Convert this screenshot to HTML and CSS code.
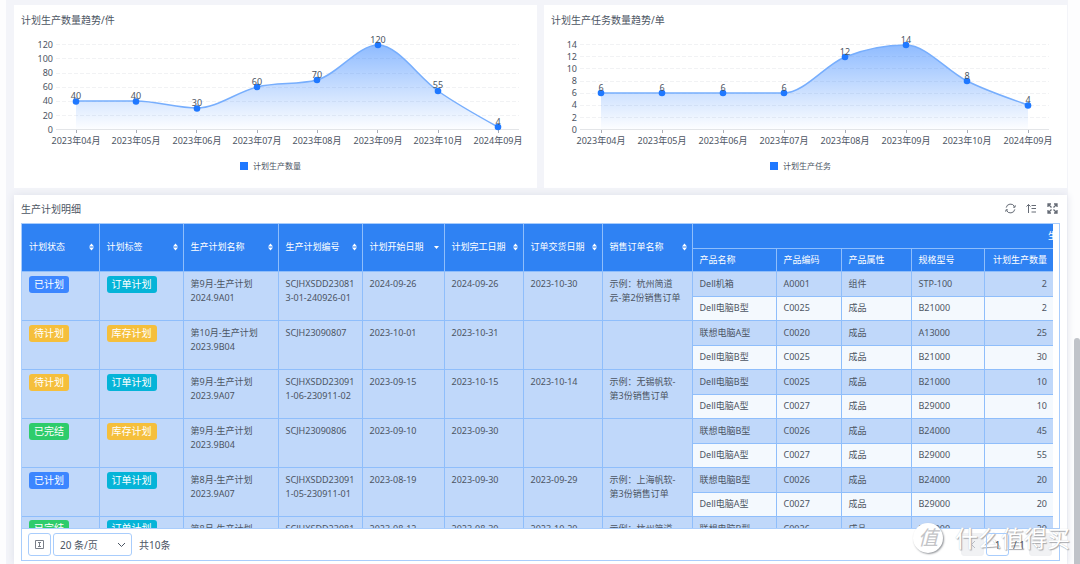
FILE: index.html
```html
<!DOCTYPE html>
<html lang="zh-CN">
<head>
<meta charset="utf-8">
<title>生产计划</title>
<link rel="stylesheet" href="styles.css">
</head>
<body>
<svg class="defs" width="0" height="0" aria-hidden="true">
  <defs>
    <linearGradient id="area" x1="0" y1="15" x2="0" y2="99" gradientUnits="userSpaceOnUse">
      <stop offset="0" stop-color="#1f78ff" stop-opacity=".5"/>
      <stop offset="1" stop-color="#1f78ff" stop-opacity=".01"/>
    </linearGradient>
    <symbol id="sort" viewBox="0 0 5 8"><path d="M2.5 .5 5 3.5H0zM0 4.5h5L2.5 7.5z" fill="currentColor"/></symbol>
    <symbol id="desc" viewBox="0 0 5 8"><path d="M0 3h5L2.5 6z" fill="currentColor"/></symbol>
  </defs>
</svg>
<main class="page">
  <section class="charts">
    <article class="card">
      <h2 class="title">计划生产数量趋势/件</h2>
      <svg class="chart" viewBox="0 0 523 124" role="img" aria-label="计划生产数量趋势">
        <path class="grid" d="M42 14.5H505M42 28.5H505M42 43.5H505M42 57.5H505M42 71.5H505M42 85.5H505"/>
        <path class="axis" d="M42 99.5H505"/>
        <path class="tick" d="M62.5 100v3M122.5 100v3M182.5 100v3M243.5 100v3M303.5 100v3M363.5 100v3M424.5 100v3M484.5 100v3"/>
        <path fill="url(#area)" d="M62 71 L122 71 C142 71 163 78 183 78 C203 78 223 62 243 57 C263 52 283 55 303 50 C323 45 344 15 364 15 C384 15 404 47 424 61 C444 75 464 86 484 97V99H62Z"/>
        <path class="line" d="M62 71 L122 71 C142 71 163 78 183 78 C203 78 223 62 243 57 C263 52 283 55 303 50 C323 45 344 15 364 15 C384 15 404 47 424 61 C444 75 464 86 484 97"/>
        <g class="dots"><circle cx="62" cy="71.500" r="3.300"/><circle cx="122" cy="71.500" r="3.300"/><circle cx="183" cy="78.500" r="3.300"/><circle cx="243" cy="57" r="3.300"/><circle cx="303" cy="50" r="3.300"/><circle cx="364" cy="15" r="3.300"/><circle cx="424" cy="61" r="3.300"/><circle cx="484" cy="97" r="3.300"/></g>
        <g class="ylabels"><text x="39" y="18">120</text><text x="39" y="32">100</text><text x="39" y="46">80</text><text x="39" y="60">60</text><text x="39" y="74">40</text><text x="39" y="89">20</text><text x="39" y="103">0</text></g>
        <g class="labels"><text x="62" y="69">40</text><text x="122" y="69">40</text><text x="183" y="76">30</text><text x="243" y="55">60</text><text x="303" y="48">70</text><text x="364" y="13">120</text><text x="424" y="58">55</text><text x="484" y="95">4</text></g>
        <g class="labels"><text x="62" y="114">2023年04月</text><text x="122" y="114">2023年05月</text><text x="183" y="114">2023年06月</text><text x="243" y="114">2023年07月</text><text x="303" y="114">2023年08月</text><text x="364" y="114">2023年09月</text><text x="424" y="114">2023年10月</text><text x="484" y="114">2024年09月</text></g>
      </svg>
      <p class="legend"><span class="swatch"></span>计划生产数量</p>
    </article>
    <article class="card">
      <h2 class="title">计划生产任务数量趋势/单</h2>
      <svg class="chart" viewBox="0 0 523 124" role="img" aria-label="计划生产任务数量趋势">
        <path class="grid" d="M36 14.5H505M36 26.5H505M36 38.5H505M36 51.5H505M36 63.5H505M36 75.5H505M36 87.5H505"/>
        <path class="axis" d="M36 99.5H505"/>
        <path class="tick" d="M57.5 100v3M118.5 100v3M179.5 100v3M240.5 100v3M301.5 100v3M362.5 100v3M423.5 100v3M484.5 100v3"/>
        <path fill="url(#area)" d="M57 63H240C260 63 281 35 301 27 C321 19 342 15 362 15 C382 15 403 41 423 51 C443 61 464 68 484 75V99H57Z"/>
        <path class="line" d="M57 63H240C260 63 281 35 301 27 C321 19 342 15 362 15 C382 15 403 41 423 51 C443 61 464 68 484 75"/>
        <g class="dots"><circle cx="57" cy="63" r="3.300"/><circle cx="118" cy="63" r="3.300"/><circle cx="179" cy="63" r="3.300"/><circle cx="240" cy="63" r="3.300"/><circle cx="301" cy="27" r="3.300"/><circle cx="362" cy="15" r="3.300"/><circle cx="423" cy="51" r="3.300"/><circle cx="484" cy="75.500" r="3.300"/></g>
        <g class="ylabels"><text x="33" y="18">14</text><text x="33" y="30">12</text><text x="33" y="42">10</text><text x="33" y="54">8</text><text x="33" y="66">6</text><text x="33" y="78">4</text><text x="33" y="91">2</text><text x="33" y="103">0</text></g>
        <g class="labels"><text x="57" y="61">6</text><text x="118" y="61">6</text><text x="179" y="61">6</text><text x="240" y="61">6</text><text x="301" y="25">12</text><text x="362" y="13">14</text><text x="423" y="49">8</text><text x="484" y="73">4</text></g>
        <g class="labels"><text x="57" y="114">2023年04月</text><text x="118" y="114">2023年05月</text><text x="179" y="114">2023年06月</text><text x="240" y="114">2023年07月</text><text x="301" y="114">2023年08月</text><text x="362" y="114">2023年09月</text><text x="423" y="114">2023年10月</text><text x="484" y="114">2024年09月</text></g>
      </svg>
      <p class="legend"><span class="swatch"></span>计划生产任务</p>
    </article>
  </section>

  <section class="card detail">
    <header class="detail-head">
      <h2 class="title">生产计划明细</h2>
      <div class="tools">
        <button class="tool" aria-label="刷新"><svg viewBox="0 0 11 11"><path d="M1.2 4.6A4.4 4.4 0 0 1 9.5 3.6M9.8 6.4A4.4 4.4 0 0 1 1.5 7.4M8 4l2 .3.3-2M3 7l-2-.3-.3 2"/></svg></button>
        <button class="tool" aria-label="排序"><svg viewBox="0 0 11 11"><path d="M2.500 10V1.500M.5 3.500l2-2 2 2M5.500 2.500H10M5.500 5.500H10M5.500 9H10"/></svg></button>
        <button class="tool" aria-label="全屏"><svg viewBox="0 0 11 11"><path stroke-width="1.300" d="M1 4V1h3M7 1h3v3M10 7v3H7M4 10H1V7M1 1l3.500 3.500M10 1 6.500 4.500M10 10 6.500 6.500M1 10l3.500-3.500"/></svg></button>
      </div>
    </header>
    <div class="frame">
      <div class="scroll">
        <table class="plans">
          <colgroup><col class="w77"><col class="w84"><col class="w95"><col class="w84"><col class="w82"><col class="w79"><col class="w79"><col class="w90"><col class="w84"><col class="w65"><col class="w70"><col class="w73"><col></colgroup>
          <thead>
            <tr>
              <th rowspan="2"><button class="sorter">计划状态<svg><use href="#sort"/></svg></button></th>
              <th rowspan="2"><button class="sorter">计划标签<svg><use href="#sort"/></svg></button></th>
              <th rowspan="2"><button class="sorter">生产计划名称<svg><use href="#sort"/></svg></button></th>
              <th rowspan="2"><button class="sorter">生产计划编号<svg><use href="#sort"/></svg></button></th>
              <th rowspan="2"><button class="sorter">计划开始日期<svg><use href="#desc"/></svg></button></th>
              <th rowspan="2"><button class="sorter">计划完工日期<svg><use href="#sort"/></svg></button></th>
              <th rowspan="2"><button class="sorter">订单交货日期<svg><use href="#sort"/></svg></button></th>
              <th rowspan="2"><button class="sorter">销售订单名称<svg><use href="#sort"/></svg></button></th>
              <th class="group" colspan="5">生</th>
            </tr>
            <tr class="fields"><th>产品名称</th><th>产品编码</th><th>产品属性</th><th>规格型号</th><th class="num">计划生产数量</th></tr>
          </thead>
          <tbody>
            <tr class="odd"><td rowspan="2"><span class="tag blue">已计划</span></td><td rowspan="2"><span class="tag cyan">订单计划</span></td><td rowspan="2">第9月-生产计划<br>2024.9A01</td><td rowspan="2">SCJHXSDD23081<br>3-01-240926-01</td><td rowspan="2">2024-09-26</td><td rowspan="2">2024-09-26</td><td rowspan="2">2023-10-30</td><td rowspan="2">示例：杭州简道<br>云-第2份销售订单</td><td>Dell机箱</td><td>A0001</td><td>组件</td><td>STP-100</td><td class="num">2</td></tr>
            <tr class="even"><td>Dell电脑B型</td><td>C0025</td><td>成品</td><td>B21000</td><td class="num">2</td></tr>
            <tr class="odd"><td rowspan="2"><span class="tag amber">待计划</span></td><td rowspan="2"><span class="tag amber">库存计划</span></td><td rowspan="2">第10月-生产计划<br>2023.9B04</td><td rowspan="2">SCJH23090807</td><td rowspan="2">2023-10-01</td><td rowspan="2">2023-10-31</td><td rowspan="2"></td><td rowspan="2"></td><td>联想电脑A型</td><td>C0020</td><td>成品</td><td>A13000</td><td class="num">25</td></tr>
            <tr class="even"><td>Dell电脑B型</td><td>C0025</td><td>成品</td><td>B21000</td><td class="num">30</td></tr>
            <tr class="odd"><td rowspan="2"><span class="tag amber">待计划</span></td><td rowspan="2"><span class="tag cyan">订单计划</span></td><td rowspan="2">第9月-生产计划<br>2023.9A07</td><td rowspan="2">SCJHXSDD23091<br>1-06-230911-02</td><td rowspan="2">2023-09-15</td><td rowspan="2">2023-10-15</td><td rowspan="2">2023-10-14</td><td rowspan="2">示例：无锡帆软-<br>第3份销售订单</td><td>Dell电脑B型</td><td>C0025</td><td>成品</td><td>B21000</td><td class="num">10</td></tr>
            <tr class="even"><td>Dell电脑A型</td><td>C0027</td><td>成品</td><td>B29000</td><td class="num">10</td></tr>
            <tr class="odd"><td rowspan="2"><span class="tag green">已完结</span></td><td rowspan="2"><span class="tag amber">库存计划</span></td><td rowspan="2">第9月-生产计划<br>2023.9B04</td><td rowspan="2">SCJH23090806</td><td rowspan="2">2023-09-10</td><td rowspan="2">2023-09-30</td><td rowspan="2"></td><td rowspan="2"></td><td>联想电脑B型</td><td>C0026</td><td>成品</td><td>B24000</td><td class="num">45</td></tr>
            <tr class="even"><td>Dell电脑A型</td><td>C0027</td><td>成品</td><td>B29000</td><td class="num">55</td></tr>
            <tr class="odd"><td rowspan="2"><span class="tag blue">已计划</span></td><td rowspan="2"><span class="tag cyan">订单计划</span></td><td rowspan="2">第8月-生产计划<br>2023.9A07</td><td rowspan="2">SCJHXSDD23091<br>1-05-230911-01</td><td rowspan="2">2023-08-19</td><td rowspan="2">2023-09-30</td><td rowspan="2">2023-09-29</td><td rowspan="2">示例：上海帆软-<br>第3份销售订单</td><td>联想电脑B型</td><td>C0026</td><td>成品</td><td>B24000</td><td class="num">20</td></tr>
            <tr class="even"><td>Dell电脑A型</td><td>C0027</td><td>成品</td><td>B29000</td><td class="num">20</td></tr>
            <tr class="odd"><td><span class="tag green">已完结</span></td><td><span class="tag cyan">订单计划</span></td><td>第8月-生产计划</td><td>SCJHXSDD23081</td><td>2023-08-12</td><td>2023-08-30</td><td>2023-10-20</td><td>示例：杭州简道</td><td>联想电脑B型</td><td>C0026</td><td>成品</td><td>B24000</td><td class="num">20</td></tr>
          </tbody>
        </table>
      </div>
      <footer class="pager">
        <button class="box" aria-label="列设置"><svg class="columns" viewBox="0 0 9 9"><path d="M.5.5h8v8h-8zM4.500 2.500v4M3 2.500h3M3 6.500h3"/></svg></button>
        <span class="size">
          <select class="select" aria-label="每页条数"><option>20 条/页</option></select>
          <svg class="chevron" viewBox="0 0 9 6"><path d="M1 1l3.5 3.5L8 1"/></svg>
        </span>
        <span class="total">共10条</span>
        <button class="box flat" aria-label="上一页"><svg class="arrow" viewBox="0 0 6 9"><path d="M5 1 1.5 4.5 5 8"/></svg></button>
        <input class="box current" aria-label="页码" value="1">
        <span class="pages">/ 1</span>
        <button class="box flat" aria-label="下一页"><svg class="arrow" viewBox="0 0 6 9"><path d="M1 1l3.5 3.5L1 8"/></svg></button>
      </footer>
    </div>
  </section>
</main>
<div class="thumb"></div>
<div class="watermark"><span class="seal">值</span><span>什么值得买</span></div>
</body>
</html>
```

FILE: styles.css
```css
* { box-sizing: border-box; }

body {
  margin: 0;
  height: 100vh;
  overflow: hidden;
  position: relative;
  background: #fdfdfe;
  color: #4c5563;
  font: 9px/14px "Noto Sans", "Noto Sans CJK SC", sans-serif;
}

button, input, select {
  margin: 0;
  padding: 0;
  border: 0;
  background: none;
  color: inherit;
  font: inherit;
}

.defs { position: absolute; }

.page {
  display: flex;
  flex-direction: column;
  gap: 7px;
  height: 100%;
  margin: 0 12px 0 6px;
  padding: 5px 1px 0 8px;
  background: #f3f4f9;
}

.charts { display: grid; grid-template-columns: 1fr 1fr; gap: 7px; }

.card { min-width: 0; background: #fff; }

.title {
  margin: 0;
  padding: 8px 7px 3px;
  font-size: 10px;
  font-weight: 400;
  line-height: 14px;
}

.chart { display: block; width: 100%; fill: #4c5563; }
.grid { fill: none; stroke: #f1f2f4; stroke-dasharray: 4 2; }
.axis { stroke: #e3e5e8; }
.tick { stroke: #a9adb5; }
.line { fill: none; stroke: #77aefd; stroke-width: 1.5px; }
.dots { fill: #1f78ff; }
.labels { text-anchor: middle; }
.ylabels { text-anchor: end; }

.legend {
  display: flex;
  align-items: center;
  justify-content: center;
  gap: 5px;
  margin: 0;
  padding: 5px 10px 15px 0;
  font-size: 8px;
}

.swatch { width: 8px; height: 8px; background: #1f78ff; }

.detail {
  display: flex;
  flex: 1;
  flex-direction: column;
  min-height: 0;
  padding: 0 7px 3px;
  box-shadow: 0 0 8px #dfe1ea;
}

.detail-head { display: flex; justify-content: space-between; height: 28px; }
.detail-head .title { padding: 7px 0; }
.tools { display: flex; align-items: center; gap: 10px; padding: 0 2px 1px 0; }
.tool { width: 11px; height: 11px; }
.tool svg { display: block; fill: none; stroke: #656b75; }

.frame {
  display: flex;
  flex: 1;
  flex-direction: column;
  min-height: 0;
  border: 1px solid #a9cdfc;
}

.scroll { flex: 1; min-height: 0; margin-right: 6px; overflow: hidden; }

.plans {
  width: calc(100% + 4px);
  border-collapse: collapse;
  border-style: hidden;
  table-layout: fixed;
}

.w65 { width: 65px; }
.w70 { width: 70px; }
.w73 { width: 73px; }
.w77 { width: 77px; }
.w79 { width: 79px; }
.w82 { width: 82px; }
.w84 { width: 84px; }
.w90 { width: 90px; }
.w95 { width: 95px; }

.plans th {
  height: 24px;
  padding: 0 5px 0 7px;
  border: 1px solid #8fbefb;
  background: #2f82f3;
  color: #fff;
  font-weight: 400;
  text-align: left;
}

.plans .fields th { height: 23px; }
.plans .group { padding: 0; text-align: right; }

.sorter {
  display: flex;
  align-items: center;
  justify-content: space-between;
  width: 100%;
  white-space: nowrap;
}

.sorter svg { width: 5px; height: 8px; }

.plans td {
  padding: 0 7px;
  border: 1px solid #8fbefb;
  white-space: nowrap;
}

.plans td[rowspan] { padding-top: 5px; vertical-align: top; }
.odd td { height: 25px; background: #c0d8fa; }
.even td { height: 24px; background: #f4f9fe; }
.plans .num { padding-right: 10px; text-align: right; }

.tag {
  display: block;
  width: fit-content;
  margin-top: -1px;
  padding: 0 5px;
  border-radius: 3px;
  color: #fff;
  font-size: 10px;
  line-height: 17px;
}

.blue { background: #3c86ff; }
.cyan { background: #05b4d8; }
.amber { background: #f5bf3c; }
.green { background: #2ecc6b; }

.pager {
  display: flex;
  align-items: center;
  gap: 2px;
  height: 32px;
  padding: 0 7px 0 6px;
  border-top: 1px solid #a9cdfc;
  font-size: 10px;
}

.box {
  display: flex;
  align-items: center;
  justify-content: center;
  width: 23px;
  height: 23px;
  border: 1px solid #a9cdfc;
  border-radius: 3px;
  text-align: center;
}

.columns { width: 9px; height: 9px; fill: none; stroke: #7a7f88; }
.flat { border-color: #f0f1f3; background: #f1f2f4; }
.arrow { width: 6px; height: 9px; fill: none; stroke: #b9bdc4; }
.size { display: flex; position: relative; }

.select {
  width: 79px;
  height: 23px;
  padding: 0 6px;
  border: 1px solid #a9cdfc;
  border-radius: 3px;
  appearance: none;
}

.chevron {
  position: absolute;
  top: 9px;
  right: 6px;
  width: 9px;
  height: 6px;
  fill: none;
  stroke: #4c5563;
}

.total { margin: 0 auto 0 5px; }
.pages { width: 16px; text-align: center; }
.current, .pages { position: relative; z-index: 1; }

.thumb {
  position: absolute;
  top: 60%;
  right: 0;
  bottom: 0;
  width: 6px;
  border-radius: 3px 3px 0 0;
  background: #c0c3c9;
}

.watermark {
  position: absolute;
  right: 10px;
  bottom: 11px;
  display: flex;
  align-items: center;
  gap: 12px;
  color: #fff;
  font-size: 23px;
  line-height: 30px;
  text-shadow: 1px 1px 1px #a5a7ab, 0 0 1px #c5c7ca;
}

.seal {
  width: 30px;
  height: 30px;
  border-radius: 50%;
  background: #fff;
  box-shadow: 1px 1px 2px #8f9297;
  color: #c3c4c7;
  font-size: 20px;
  font-style: italic;
  text-align: center;
  text-shadow: none;
}
```
